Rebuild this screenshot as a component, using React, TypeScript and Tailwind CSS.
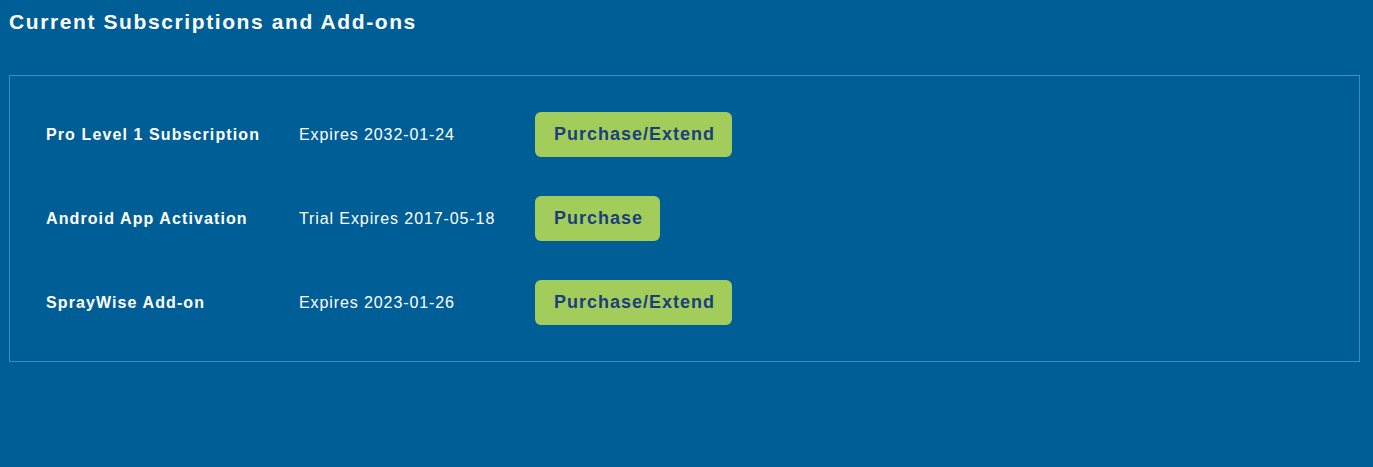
import React from 'react';

export default function App() {
  const items = [
    { name: 'Pro Level 1 Subscription', expires: 'Expires 2032-01-24', action: 'Purchase/Extend' },
    { name: 'Android App Activation', expires: 'Trial Expires 2017-05-18', action: 'Purchase' },
    { name: 'SprayWise Add-on', expires: 'Expires 2023-01-26', action: 'Purchase/Extend' },
  ];

  return (
    <div className="min-h-[467px] w-full bg-[#005e96] pl-[9px] pr-[13px] pt-[8px] text-white" style={{ fontFamily: '"Liberation Sans", Arial, sans-serif' }}>
      <h1 className="text-[21px] font-bold leading-[28px] tracking-[1.6px]">Current Subscriptions and Add-ons</h1>

      {/* Subscriptions box */}
      <div className="mt-[39px] flex flex-col gap-[39px] border border-[#3f8cc4] py-[36px] pl-[36px]">
        {items.map((item, index) => (
          <div key={index} className="flex h-[45px] items-center">
            <div className="w-[253px] text-[16px] font-bold tracking-[1.1px]">{item.name}</div>
            <div className="w-[236px] text-[16px] tracking-[0.9px]">{item.expires}</div>
            <button className="h-[45px] rounded-[6px] bg-[#a2cd5b] pl-[19px] pr-[17px] text-[18px] font-bold tracking-[1px] text-[#1b3f7d]">
              {item.action}
            </button>
          </div>
        ))}
      </div>
    </div>
  );
}
